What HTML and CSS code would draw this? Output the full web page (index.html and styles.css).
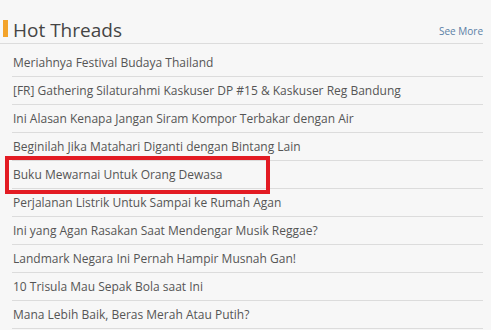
FILE: index.html
```html
<!DOCTYPE html>
<html lang="id">
<head>
    <meta charset="UTF-8">
    <title>Hot Threads</title>
    <link rel="stylesheet" href="styles.css">
</head>
<body>
    <div class="panel">
        <div class="panel-head">
            <span class="accent"></span>
            <h2>Hot Threads</h2>
            <a class="see-more" href="#">See More</a>
        </div>
        <ul class="threads">
            <li>Meriahnya Festival Budaya Thailand</li>
            <li>[FR] Gathering Silaturahmi Kaskuser DP #15 &amp; Kaskuser Reg Bandung</li>
            <li>Ini Alasan Kenapa Jangan Siram Kompor Terbakar dengan Air</li>
            <li>Beginilah Jika Matahari Diganti dengan Bintang Lain</li>
            <li class="marked">Buku Mewarnai Untuk Orang Dewasa</li>
            <li>Perjalanan Listrik Untuk Sampai ke Rumah Agan</li>
            <li>Ini yang Agan Rasakan Saat Mendengar Musik Reggae?</li>
            <li>Landmark Negara Ini Pernah Hampir Musnah Gan!</li>
            <li>10 Trisula Mau Sepak Bola saat Ini</li>
            <li>Mana Lebih Baik, Beras Merah Atau Putih?</li>
        </ul>
    </div>
</body>
</html>
```

FILE: styles.css
```css
* {
    box-sizing: border-box;
    margin: 0;
    padding: 0;
}

body {
    font-family: 'Open Sans', sans-serif;
    background-color: #f7f7f7;
    color: #555;
    overflow: hidden;
}

.panel {
    width: 483px;
}

.panel-head {
    display: flex;
    align-items: flex-end;
    height: 44px;
    padding: 0 0 6px 3px;
    border-bottom: 1px solid #dcdcdc;
}

.accent {
    width: 5px;
    height: 17px;
    background-color: #f3a32a;
}

.panel-head h2 {
    font-size: 19px;
    font-weight: 400;
    line-height: 20px;
    color: #454545;
    margin: 0 0 -3px 5px;
}

.see-more {
    margin-left: auto;
    font-size: 10px;
    line-height: 12px;
    color: #5b7fa6;
    text-decoration: none;
}

.threads {
    list-style: none;
    margin: 5px 0 0 12px;
}

.threads li {
    position: relative;
    height: 28px;
    line-height: 28px;
    padding-left: 1px;
    font-size: 12px;
    border-bottom: 1px solid #dcdcdc;
    white-space: nowrap;
}

.threads li.marked {
    z-index: 1;
}

/* red highlight frame around the picked thread */
.threads li.marked::after {
    content: '';
    box-sizing: border-box;
    position: absolute;
    left: -7px;
    top: -5px;
    width: 265px;
    height: 38px;
    border: 4px solid #e31b23;
}
```
